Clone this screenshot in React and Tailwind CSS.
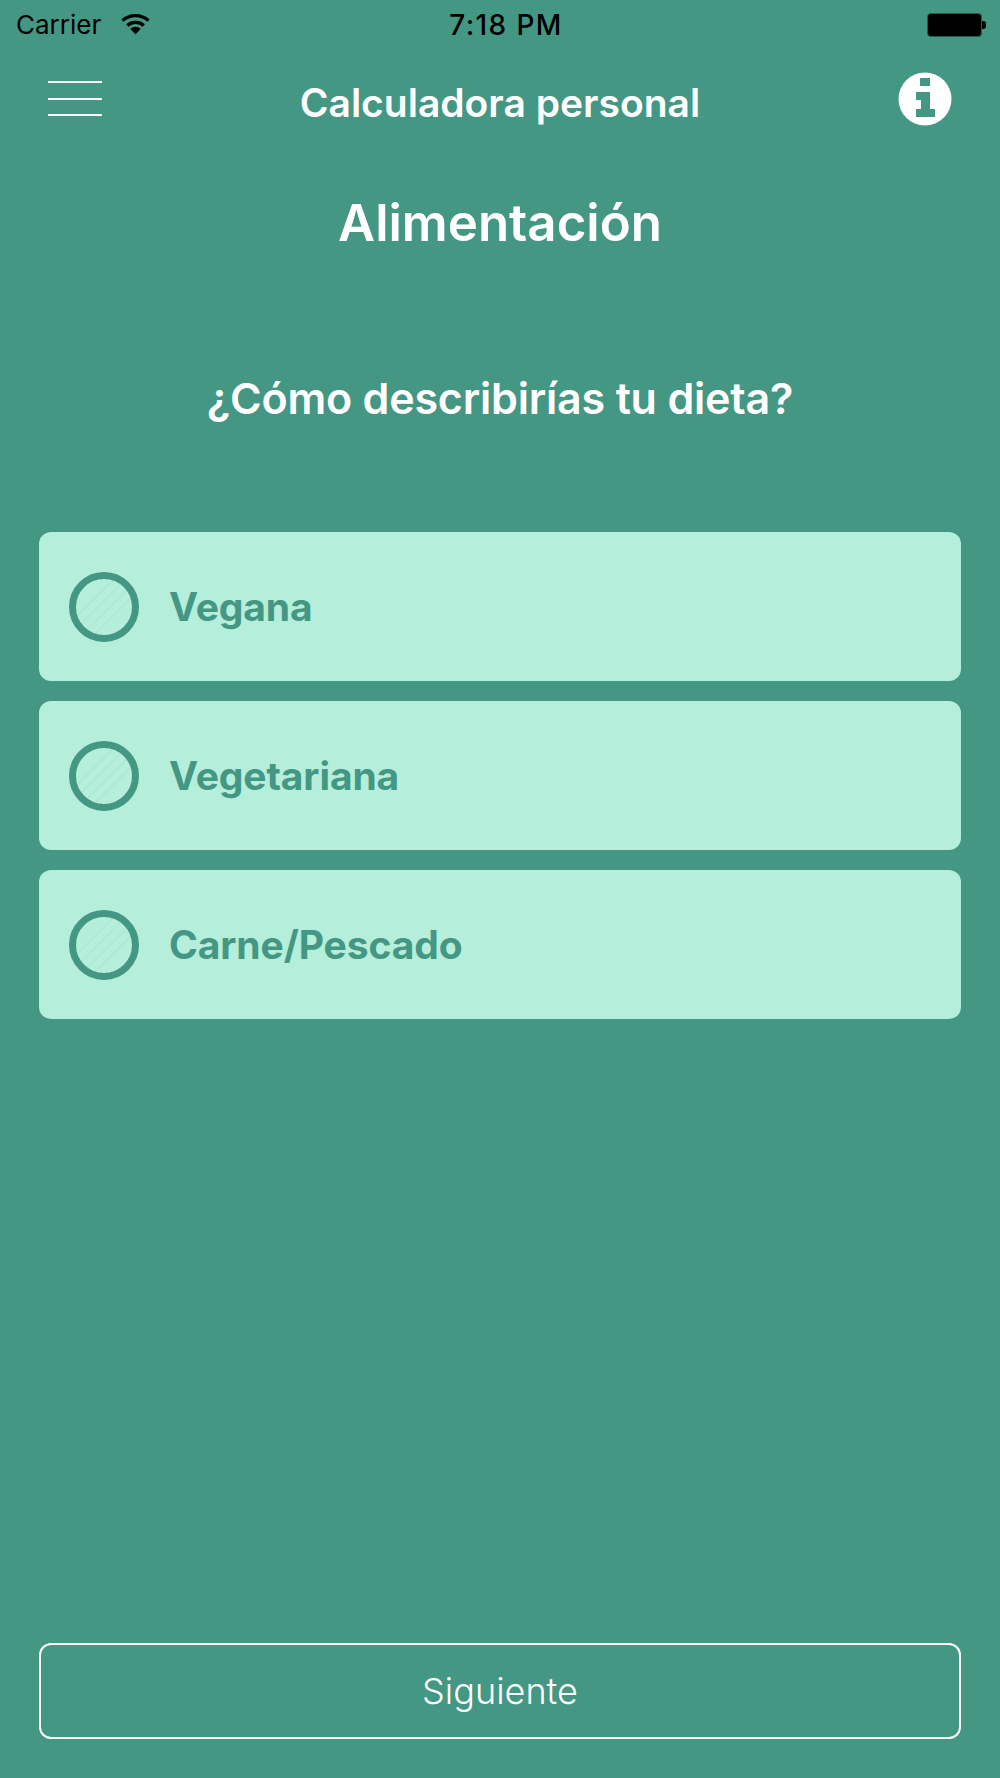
import React from "react";

const Ring = () => (
  <svg width="70" height="70" viewBox="0 0 70 70" className="shrink-0">
    <g stroke="#a9e3d0" strokeWidth="1.5" opacity="0.5">
      <line x1="8" y1="44" x2="44" y2="8" />
      <line x1="8" y1="56" x2="56" y2="8" />
      <line x1="14" y1="62" x2="62" y2="14" />
      <line x1="26" y1="62" x2="62" y2="26" />
    </g>
    <circle cx="35" cy="35" r="31.5" fill="none" stroke="#449782" strokeWidth="7" />
  </svg>
);

const Option = ({ label }) => (
  <div className="flex items-center h-[149px] rounded-[12px] bg-[#b5eeda] pl-[30px] gap-[30px]">
    <Ring />
    <span className="text-[39px] font-bold text-[#449782] leading-none tracking-[-0.1px]">{label}</span>
  </div>
);

export default function App() {
  return (
    <div
      className="w-[1000px] h-[1778px] bg-[#449782] flex flex-col text-white overflow-hidden"
      style={{ fontFamily: '"Inter", "Noto Sans", sans-serif' }}
    >
      <div className="h-[50px] flex items-center justify-between pl-[16px] pr-[14px] text-black shrink-0">
        <div className="w-[310px] flex items-center gap-[20px]">
          <span className="text-[26px] leading-none">Carrier</span>
          <svg width="29" height="22" viewBox="0 0 30 22" className="-mt-[2px]">
            <path d="M1.5 7.5C9 0.5 21 0.5 28.5 7.5" fill="none" stroke="#000" strokeWidth="3.4" />
            <path d="M6.5 12.5C11 8.3 19 8.3 23.5 12.5" fill="none" stroke="#000" strokeWidth="3.4" />
            <path d="M9.5 16 Q15 11.5 20.5 16 L15 21.5Z" fill="#000" />
          </svg>
        </div>
        <span className="text-[28px] font-medium leading-none tracking-[1.4px]">7:18 PM</span>
        <div className="w-[300px] flex justify-end items-center">
          <div className="w-[55px] h-[24px] rounded-[4px] bg-black border border-[#1f5c4d]" />
          <div className="w-[4px] h-[8px] bg-black rounded-r-[3px]" />
        </div>
      </div>

      <div className="h-[100px] shrink-0 flex items-center justify-between px-[48px]">
        <div className="w-[54px] flex flex-col gap-[14.5px] -mt-[3px]">
          <div className="h-[2px] bg-white" />
          <div className="h-[2px] bg-white" />
          <div className="h-[2px] bg-white" />
        </div>
        <span className="text-[39px] font-semibold leading-none mt-[4px]">Calculadora personal</span>
        <svg width="54" height="54" viewBox="0 0 54 54" className="-mt-[2px]">
          <circle cx="27" cy="27" r="26.5" fill="#fff" />
          <path d="M22 6h10v8H22zM18 20h14v17h5v8H18v-8h5V28h-5z" fill="#449782" />
        </svg>
      </div>

      <div className="text-center text-[51px] font-semibold leading-none mt-[47px]">Alimentación</div>
      <div className="text-center text-[43px] font-semibold leading-none mt-[129px] tracking-[-0.2px]">¿Cómo describirías tu dieta?</div>

      <div className="mt-[112px] mx-[39px] flex flex-col gap-[20px]">
        <Option label="Vegana" />
        <Option label="Vegetariana" />
        <Option label="Carne/Pescado" />
      </div>

      <div className="mt-auto mb-[39px] mx-[39px] h-[96px] rounded-[12px] border-2 border-white flex items-center justify-center text-[36px] font-light">
        Siguiente
      </div>
    </div>
  );
}
